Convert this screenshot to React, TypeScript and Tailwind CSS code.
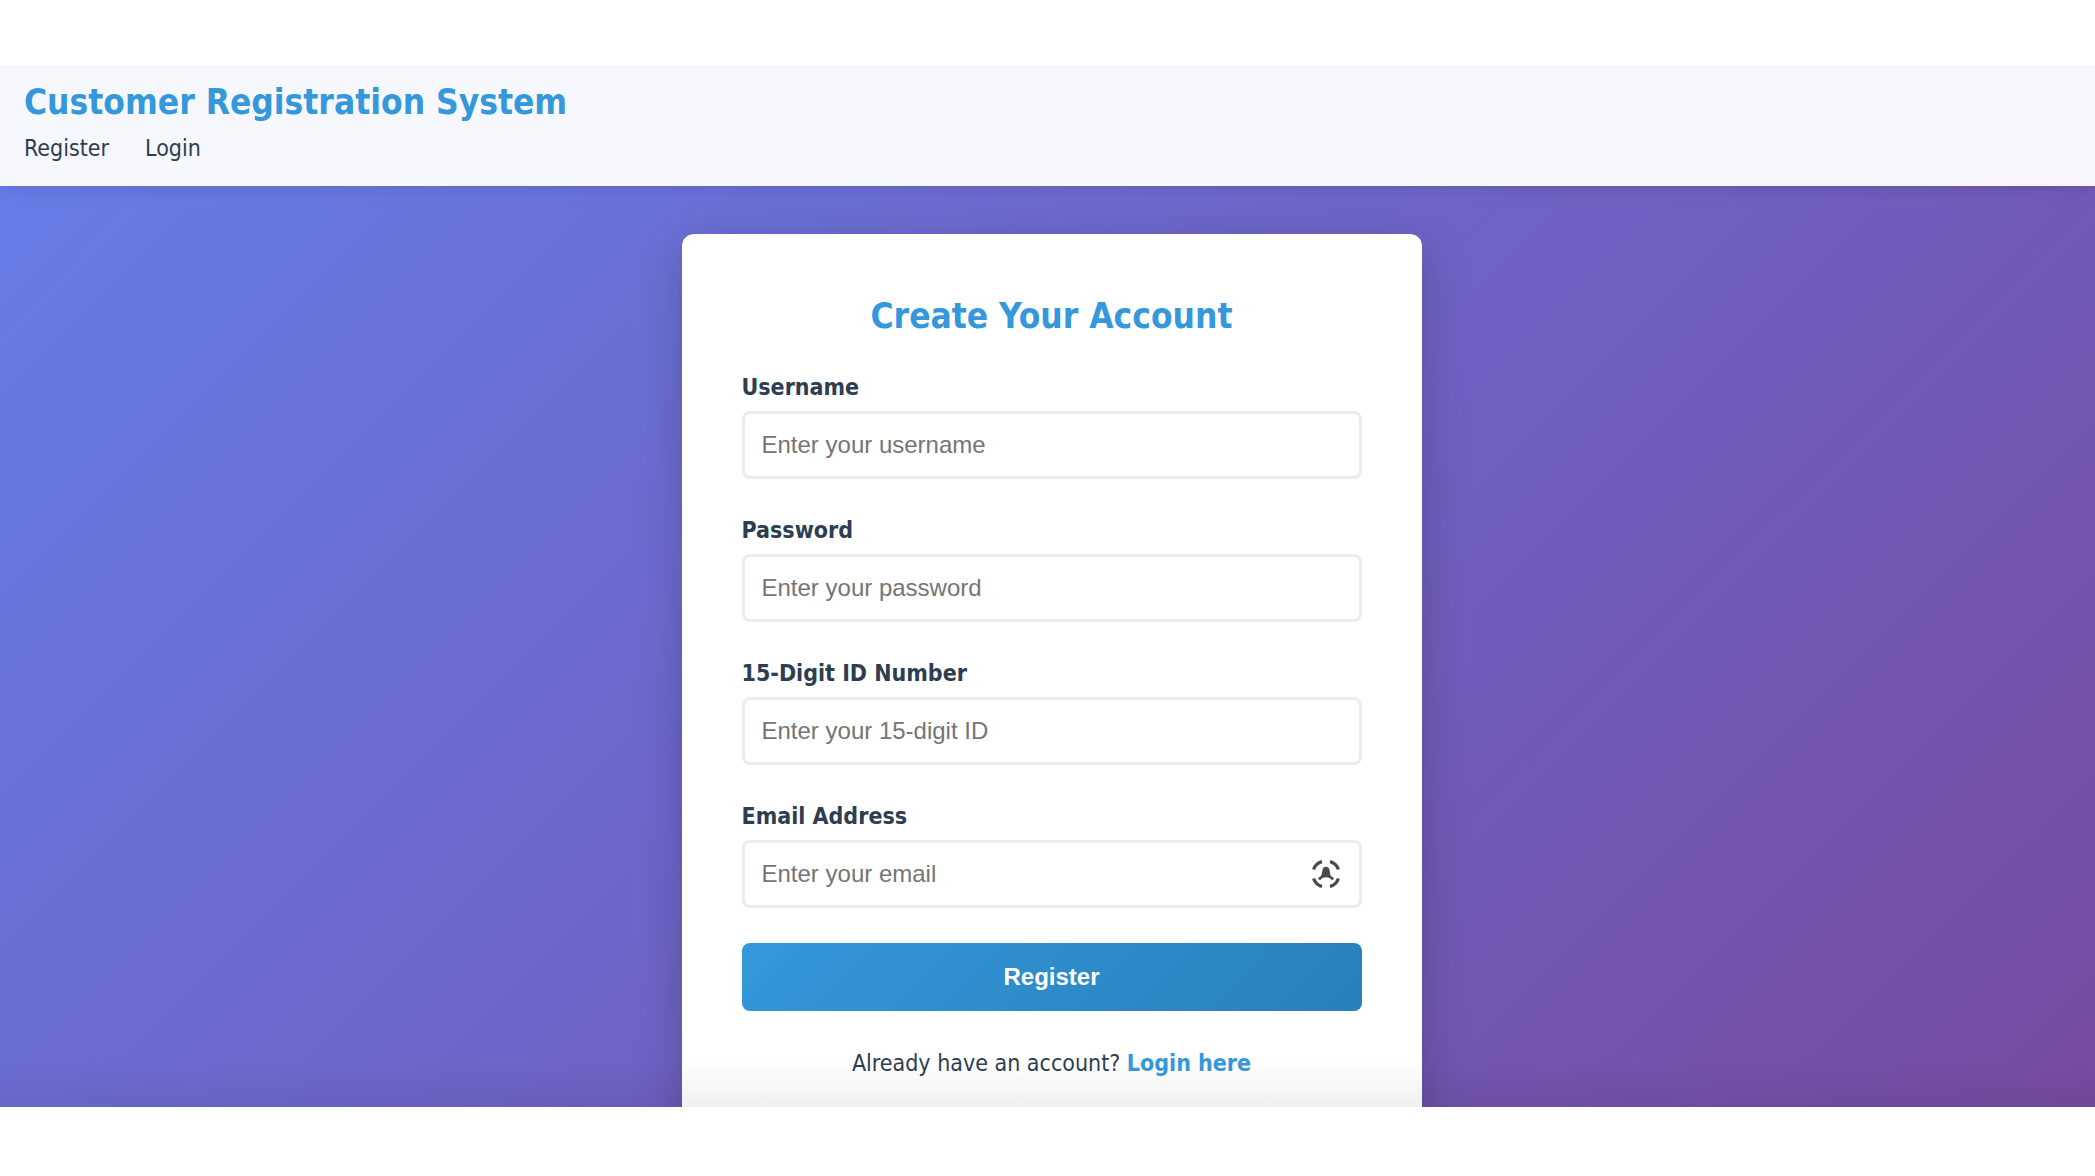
import { useState } from 'react';

const navLinks = [
  { label: 'Register', href: '#register' },
  { label: 'Login', href: '#login' },
];

const fields = [
  { id: 'username', label: 'Username', type: 'text', placeholder: 'Enter your username' },
  { id: 'password', label: 'Password', type: 'password', placeholder: 'Enter your password' },
  { id: 'idNumber', label: '15-Digit ID Number', type: 'text', placeholder: 'Enter your 15-digit ID' },
  { id: 'email', label: 'Email Address', type: 'email', placeholder: 'Enter your email', autofill: true },
];

function AutofillIcon() {
  return (
    <svg viewBox="0 0 28 28" className="w-7 h-7" fill="none" stroke="#4a4a4a" strokeWidth="3.2" aria-hidden="true">
      <path d="M1.600 9.500C2.200 7.500 3 6.200 4.500 4.700C6 3.200 7.500 2.200 10 1.600M18 1.600C20.500 2.200 22 3.200 23.500 4.700C25 6.200 25.800 7.500 26.400 9.500M26.400 18.500C25.800 20.500 25 21.800 23.500 23.300C22 24.800 20.500 25.800 18 26.400M10 26.400C7.500 25.800 6 24.800 4.500 23.300C3 21.800 2.200 20.500 1.600 18.500" />
      <path d="M10.500 10.200A3.500 3.500 0 0 1 17.500 10.200L18.800 16.500H9.200Z" fill="#4a4a4a" stroke="none" />
      <path d="M7 19.500C8.500 17.200 11 16 14 16C17 16 19.500 17.200 21 19.500" strokeWidth="2.600" />
    </svg>
  );
}

function Header() {
  return (
    <header className="relative bg-white/95 px-6 pt-[15px] pb-5 shadow-[0_3px_15px_rgba(0,0,0,0.1)]">
      <h1 className="text-[35px] leading-[44px] font-bold text-[#3498db]">Customer Registration System</h1>
      <nav className="mt-1.5 flex gap-9">
        {navLinks.map((link) => (
          <a key={link.label} href={link.href} className="text-[23px] leading-9 text-[#2c3e50]">
            {link.label}
          </a>
        ))}
      </nav>
    </header>
  );
}

function RegisterForm() {
  const [values, setValues] = useState<Record<string, string>>({});

  return (
    <form
      onSubmit={(e) => e.preventDefault()}
      className="w-full max-w-[740px] rounded-xl bg-white px-[60px] pt-[60px] pb-20 shadow-[0_12px_48px_rgba(0,0,0,0.2)]"
    >
      <h2 className="mb-[33px] text-center text-[35px] leading-[44px] font-bold text-[#3498db]">
        Create Your Account
      </h2>
      {fields.map((field) => (
        <div key={field.id} className="mb-[35px]">
          <label htmlFor={field.id} className="mb-2 block text-[23px] leading-8 font-bold text-[#2c3e50]">
            {field.label}
          </label>
          <div className="relative">
            <input
              id={field.id}
              type={field.type}
              placeholder={field.placeholder}
              value={values[field.id] ?? ''}
              onChange={(e) => setValues({ ...values, [field.id]: e.target.value })}
              className="block h-[68px] w-full rounded-lg border-[3px] border-[#ececec] bg-white px-[17px] font-['Liberation_Sans',Arial,sans-serif] text-[24px] text-[#2c3e50] outline-none placeholder:text-[#757575] focus:border-[#3498db]"
            />
            {field.autofill && (
              <span className="pointer-events-none absolute inset-y-0 right-[22px] flex items-center">
                <AutofillIcon />
              </span>
            )}
          </div>
        </div>
      ))}
      <button
        type="submit"
        className="block h-[68px] w-full rounded-lg bg-linear-135 from-[#3498db] to-[#2980b9] font-['Liberation_Sans',Arial,sans-serif] text-[24px] font-bold text-white"
      >
        Register
      </button>
      <p className="mt-[34px] text-center text-[23px] leading-9 text-[#2c3e50]">
        Already have an account?{' '}
        <a href="#login" className="font-bold text-[#3498db]">
          Login here
        </a>
      </p>
    </form>
  );
}

export default function App() {
  return (
    <div className="flex h-screen flex-col bg-white pt-[65px] pb-[69px] font-['DejaVu_Sans_Condensed','DejaVu_Sans',Tahoma,sans-serif]">
      <div className="relative min-h-0 flex-1 overflow-hidden bg-[linear-gradient(135deg,#667eea_0%,#764ba2_100%)]">
        <Header />
        <main className="flex justify-center pl-2 pt-12">
          <RegisterForm />
        </main>
        <div className="pointer-events-none absolute inset-x-0 bottom-0 h-12 bg-linear-to-b from-transparent to-black/6" />
      </div>
    </div>
  );
}
